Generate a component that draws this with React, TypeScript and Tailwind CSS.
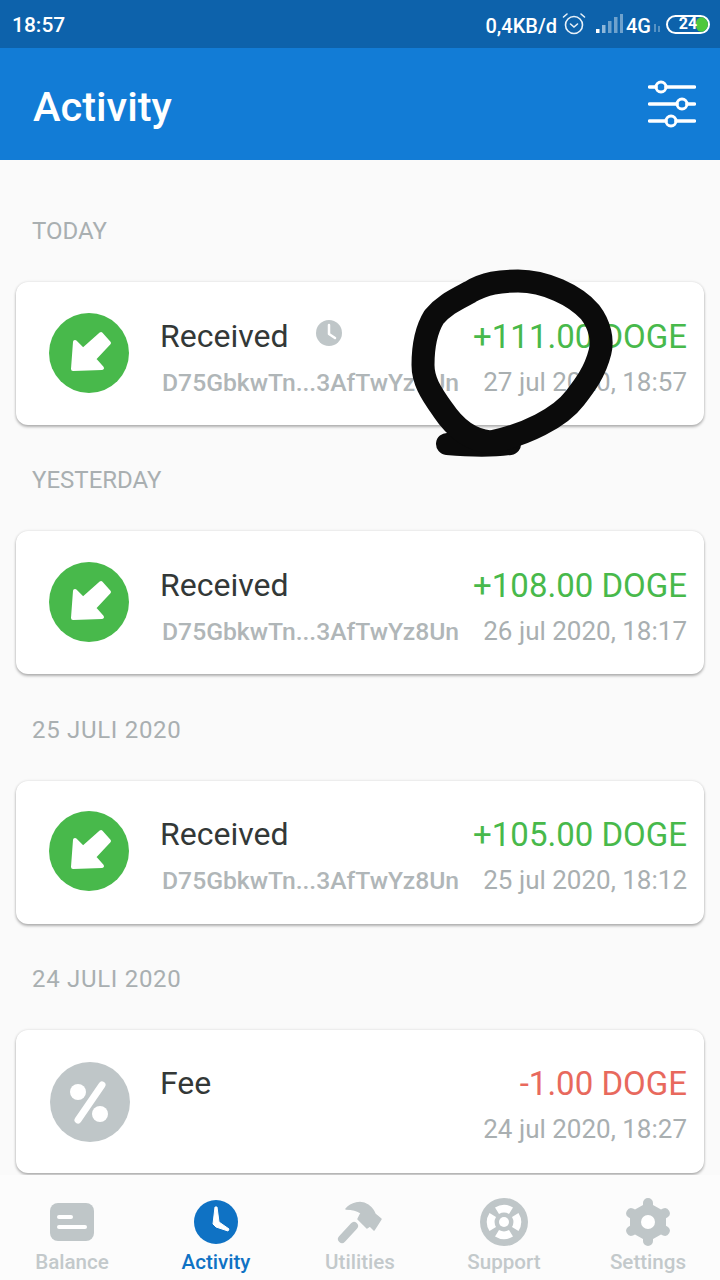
import React from "react";

const FONT = "font-['Roboto',sans-serif]";

const ReceivedIcon = () => (
  <svg width="80" height="80" viewBox="0 0 80 80" className="mb-0.5 shrink-0">
    <circle cx="40" cy="40" r="40" fill="#48b94b" />
    <path d="M24 56 L26 29 L34 37 L52 21 L60 30 L45 46 L53 55 Z" fill="#fff" stroke="#fff" strokeWidth="4" strokeLinejoin="round" />
  </svg>
);

const FeeIcon = () => (
  <svg width="80" height="80" viewBox="0 0 80 80" className="shrink-0 translate-x-px translate-y-px">
    <circle cx="40" cy="40" r="40" fill="#bfc6c8" />
    <circle cx="28" cy="30" r="8" fill="#fff" />
    <circle cx="50" cy="52" r="8" fill="#fff" />
    <path d="M52 23 L28 58" stroke="#fff" strokeWidth="7" strokeLinecap="round" />
  </svg>
);

const PendingClock = () => (
  <svg width="26" height="26" viewBox="0 0 26 26" className="mb-[7px] ml-[27px] shrink-0">
    <circle cx="13" cy="13" r="13" fill="#bfc6c8" />
    <path d="M13 5 V14 L19 18" fill="none" stroke="#fff" strokeWidth="2.5" strokeLinecap="round" strokeLinejoin="round" />
  </svg>
);

type Tx = {
  day: string;
  dated?: boolean;
  title: string;
  address?: string;
  amount: string;
  date: string;
  negative?: boolean;
  pending?: boolean;
};

const TXS: Tx[] = [
  { day: "TODAY", title: "Received", address: "D75GbkwTn...3AfTwYz8Un", amount: "+111.00 DOGE", date: "27 jul 2020, 18:57", pending: true },
  { day: "YESTERDAY", title: "Received", address: "D75GbkwTn...3AfTwYz8Un", amount: "+108.00 DOGE", date: "26 jul 2020, 18:17" },
  { day: "25 JULI 2020", dated: true, title: "Received", address: "D75GbkwTn...3AfTwYz8Un", amount: "+105.00 DOGE", date: "25 jul 2020, 18:12" },
  { day: "24 JULI 2020", dated: true, title: "Fee", amount: "-1.00 DOGE", date: "24 jul 2020, 18:27", negative: true },
];

const TxCard = ({ tx }: { tx: Tx }) => (
  <div className="mx-4 flex h-[143px] shrink-0 items-center rounded-xl bg-white pl-[33px] pr-[17px] shadow-[0_2px_3px_rgba(0,0,0,0.28),0_0_3px_rgba(0,0,0,0.12)]">
    {tx.negative ? <FeeIcon /> : <ReceivedIcon />}
    <div className="ml-[31px] flex min-w-0 flex-1 flex-col gap-[9px] pt-[11px]">
      <div className="flex h-[37px] items-center">
        <span className="text-[32px] leading-[37px] text-[#333837]">{tx.title}</span>
        {tx.pending && <PendingClock />}
        <span className={`ml-auto text-[33px] leading-[37px] ${tx.negative ? "text-[#e8695d]" : "text-[#48b94b]"}`}>{tx.amount}</span>
      </div>
      <div className="flex h-[37px] items-center">
        {tx.address && <span className="ml-0.5 text-[24.7px] font-medium leading-[37px] text-[#b0b6b8]">{tx.address}</span>}
        <span className="ml-auto text-[26px] leading-[37px] text-[#a9afb1]">{tx.date}</span>
      </div>
    </div>
  </div>
);

const NavItem = ({ label, active, icon }: { label: string; active?: boolean; icon: React.ReactNode }) => (
  <div className="flex w-[144px] flex-col items-center">
    <div className="flex h-[48px] items-center justify-center">{icon}</div>
    <span className={`mt-0.5 text-[20.6px] font-medium leading-7 ${active ? "text-[#0f72c4]" : "text-[#c3c9cb]"}`}>{label}</span>
  </div>
);

const BalanceIcon = () => (
  <svg width="44" height="38" viewBox="0 0 44 38">
    <rect width="44" height="38" rx="8" fill="#bfc6c8" />
    <path d="M9 14 H21 M9 24 H35" stroke="#fff" strokeWidth="4" strokeLinecap="round" />
  </svg>
);

const ActivityIcon = () => (
  <svg width="44" height="44" viewBox="0 0 44 44">
    <circle cx="22" cy="22" r="22" fill="#0f72c4" />
    <path d="M21 7 L23 7 L25 22 L35 29 L34 31 L22 27 L19 24 Z" fill="#fff" stroke="#fff" strokeWidth="1" strokeLinejoin="round" />
  </svg>
);

const HammerIcon = () => (
  <svg width="46" height="44" viewBox="0 0 46 44">
    <path d="M17 26 L5 39" stroke="#bfc6c8" strokeWidth="8" strokeLinecap="round" />
    <path d="M9 9 C14 3 24 0 31 5 C35 8 37 11 38 14 L44 19 L37 30 L33 26 L30 28 L21 19 L24 13 C20 10 14 9 9 9 Z" fill="#bfc6c8" stroke="#bfc6c8" strokeWidth="1.5" strokeLinejoin="round" />
  </svg>
);

const SupportIcon = () => (
  <svg width="48" height="48" viewBox="0 0 48 48">
    <circle cx="24" cy="24" r="24" fill="#bfc6c8" />
    <path d="M15 9.5 A17 17 0 0 1 33 9.5 L29 16 A10 10 0 0 0 19 16 Z M38.5 15 A17 17 0 0 1 38.5 33 L32 29 A10 10 0 0 0 32 19 Z M33 38.5 A17 17 0 0 1 15 38.5 L19 32 A10 10 0 0 0 29 32 Z M9.5 33 A17 17 0 0 1 9.5 15 L16 19 A10 10 0 0 0 16 29 Z" fill="#fff" />
    <circle cx="24" cy="24" r="5" fill="#fff" />
  </svg>
);

const GearIcon = () => (
  <svg width="44" height="48" viewBox="0 0 44 48">
    <path d="M22 0 a5 5 0 0 1 5 5 v2 l8 4.5 2-1 a5 5 0 0 1 5 8.5 l-2 1.2 v7.6 l2 1.2 a5 5 0 0 1-5 8.5 l-2-1 -8 4.5 v2 a5 5 0 0 1-10 0 v-2 l-8-4.5 -2 1 a5 5 0 0 1-5-8.5 l2-1.2 v-7.6 l-2-1.2 a5 5 0 0 1 5-8.5 l2 1 8-4.5 v-2 a5 5 0 0 1 5-5 Z" fill="#bfc6c8" />
    <circle cx="22" cy="24" r="7" fill="#fff" />
  </svg>
);

const FilterIcon = () => (
  <svg width="48" height="48" viewBox="0 0 48 48" fill="none" stroke="#fff" strokeWidth="3.5" strokeLinecap="round">
    <path d="M1.5 7 H8 M18 7 H46.5 M1.5 24 H29 M39 24 H46.5 M1.5 41 H18 M28 41 H46.5" />
    <circle cx="13" cy="7" r="5" strokeWidth="3" />
    <circle cx="34" cy="24" r="5" strokeWidth="3" />
    <circle cx="23" cy="41" r="5" strokeWidth="3" />
  </svg>
);

const StatusBar = () => (
  <div className="flex h-12 shrink-0 items-center bg-[#0d62ab] pl-3 pr-[10px] pt-1 text-white">
    <span className="text-[21px] font-medium">18:57</span>
    <div className="ml-auto flex items-center">
      <span className="text-[20px] font-medium">0,4KB/d</span>
      <svg width="24" height="24" viewBox="0 0 24 24" fill="none" stroke="#e8f1f8" strokeWidth="1.6" className="mb-1 ml-[5px]">
        <circle cx="12" cy="13" r="8.5" />
        <path d="M8.5 12 L12 15 L15.5 12 M1.5 5 L5 2 M22.5 5 L19 2" strokeLinecap="round" />
      </svg>
      <svg width="28" height="22" viewBox="0 0 28 22" className="mb-1 ml-[9px]">
        <rect x="1" y="16" width="3.5" height="4" fill="#fff" />
        <rect x="7" y="12" width="3.5" height="8" fill="#8fb8da" />
        <rect x="13" y="8" width="3.5" height="12" fill="#6fa2cd" />
        <rect x="19" y="4" width="3.5" height="16" fill="#6fa2cd" />
        <rect x="25" y="1" width="3" height="19" fill="#6fa2cd" />
      </svg>
      <span className="ml-[3px] text-[20px] font-medium">4G</span>
      <svg width="8" height="12" viewBox="0 0 8 12" className="ml-0.5 mt-1">
        <path d="M2 2 V10 M6 4 V10" stroke="#6fa2cd" strokeWidth="1.5" />
      </svg>
      <div className="relative ml-[5px] flex h-[19px] w-[44px] items-center justify-center overflow-hidden rounded-full border-2 border-white pb-px mb-1">
        <div className="absolute right-0 top-0 h-full w-3 rounded-full bg-[#4fc83c]" />
        <span className="relative text-[16px] font-bold leading-none">24</span>
      </div>
    </div>
  </div>
);

export default function App() {
  return (
    <div className={`relative flex h-[1280px] w-[720px] flex-col overflow-hidden bg-[#fafafa] ${FONT}`}>
      <StatusBar />
      <header className="flex h-[112px] shrink-0 items-center justify-between bg-[#127cd6] pl-[33px] pr-6">
        <h1 className="pt-1.5 text-[41.5px] font-medium text-white">Activity</h1>
        <FilterIcon />
      </header>
      <main className="flex min-h-0 flex-1 flex-col overflow-hidden pt-[59px]">
        {TXS.map((tx) => (
          <section key={tx.day} className="flex h-[249.33px] shrink-0 flex-col">
            <div className={`mb-[39px] h-6 pl-8 text-[24px] leading-6 text-[#a9afb1] ${tx.dated ? "tracking-[0.7px]" : ""}`}>{tx.day}</div>
            <TxCard tx={tx} />
          </section>
        ))}
      </main>
      <nav className="flex h-[105px] shrink-0 items-start bg-[#fcfcfc] pt-[23px]">
        <NavItem label="Balance" icon={<BalanceIcon />} />
        <NavItem label="Activity" active icon={<ActivityIcon />} />
        <NavItem label="Utilities" icon={<HammerIcon />} />
        <NavItem label="Support" icon={<SupportIcon />} />
        <NavItem label="Settings" icon={<GearIcon />} />
      </nav>
      {/* marker scribble drawn over the screenshot */}
      <svg width="720" height="1280" viewBox="0 0 720 1280" className="pointer-events-none absolute inset-0" fill="none" stroke="#0b0b0b" strokeLinecap="round" strokeLinejoin="round">
        <path strokeWidth="22" d="M447 444 C470 446 495 446 510 444" />
        <path strokeWidth="23" d="M490 442 C470 440 455 428 443 410 C430 392 423 380 423 365 C423 345 426 330 434 317 C444 305 455 300 470 292 C485 283 500 281 518 281 C545 281 575 295 590 312 C600 325 603 340 600 352 C595 372 585 385 575 398 C560 418 525 435 491 442" />
      </svg>
    </div>
  );
}
